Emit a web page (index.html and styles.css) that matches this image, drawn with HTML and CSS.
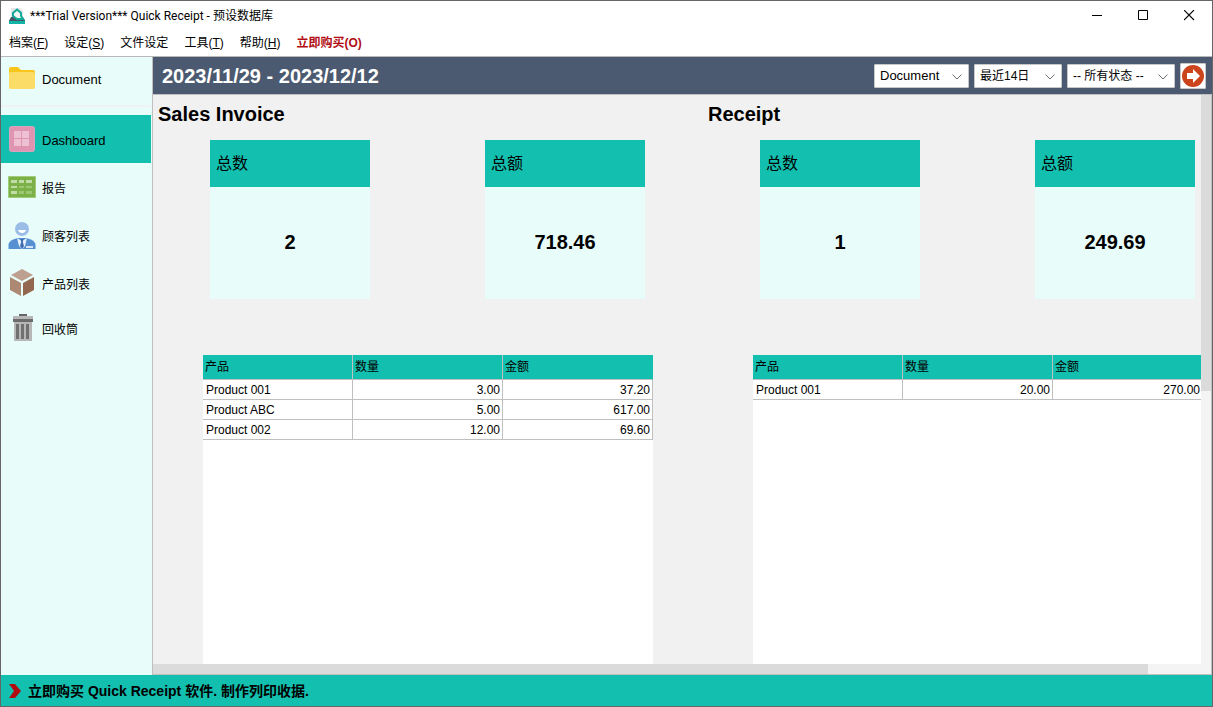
FILE: index.html
```
<!DOCTYPE html>
<html lang="zh-Hans">
<head>
<meta charset="utf-8">
<title>Quick Receipt</title>
<link rel="stylesheet" href="styles.css">
</head>
<body>
<div class="window">
  <header class="titlebar">
    <svg class="app-icon" width="16" height="16" viewBox="0 0 16 16"><path d="M2 0h9l3 3v8H2z" fill="#e4e6e8"/><path d="M0 12h16v4H0z" fill="#12b5a5"/><path d="M2 9h12l2 4H0z" fill="#475569"/><path d="M8 1.500L12 5v3l2 3H8L4 8V5z" fill="#f4f6f6" stroke="#12a999" stroke-width="2"/></svg>
    <h1 class="window-title">***Trial Version*** Quick Receipt - 预设数据库</h1>
    <div class="window-controls">
      <button class="window-button" aria-label="最小化"><svg width="11" height="11"><path d="M0 5.5h10" stroke="#000"/></svg></button>
      <button class="window-button" aria-label="最大化"><svg width="11" height="11"><path d="M.5 .5h9v9h-9z" fill="none" stroke="#000"/></svg></button>
      <button class="window-button" aria-label="关闭"><svg width="11" height="11"><path d="M0 0l10 10M10 0L0 10" stroke="#000" stroke-width="1.1"/></svg></button>
    </div>
  </header>
  <nav class="menubar">
    <button class="menu">档案(<u>F</u>)</button>
    <button class="menu">设定(<u>S</u>)</button>
    <button class="menu">文件设定</button>
    <button class="menu">工具(<u>T</u>)</button>
    <button class="menu">帮助(<u>H</u>)</button>
    <button class="menu menu-buy">立即购买(O)</button>
  </nav>
  <div class="workspace">
    <nav class="sidebar">
      <a class="side-link side-document" href="#document">
        <svg width="28" height="28" viewBox="0 0 28 28"><path d="M1 5a2 2 0 0 1 2-2h7l3 3h12a2 2 0 0 1 2 2v4H1z" fill="#f8c51b"/><rect x="1" y="8" width="26" height="17" rx="2" fill="#fbdc67"/></svg>
        <span class="side-label latin">Document</span></a>
      <a class="side-link active" href="#dashboard">
        <svg width="28" height="28" viewBox="0 0 28 28"><rect x="1.5" y="1.5" width="25" height="25" rx="2" fill="#df94b1" stroke="#d7a4bd"/><path d="M6 6h7v7H6zM14 6h7v7h-7zM6 14h7v7H6zM14 14h7v7h-7z" fill="#edc0d2"/></svg>
        <span class="side-label latin">Dashboard</span></a>
      <a class="side-link" href="#reports">
        <svg width="28" height="28" viewBox="0 0 28 28"><path d="M.5 3.5h27v21H.5z" fill="#7bb146" stroke="#a1ca7b"/><path d="M3 7h6v3H3zM11 7h5v3h-5zM18 7h6v3h-6zM3 13h6v2H3zM3 18h6v3H3z" fill="#c2dca8"/><path d="M11 13h5v2h-5zM18 13h6v2h-6zM11 18h5v3h-5zM18 18h6v3h-6z" fill="#9cc773"/></svg>
        <span class="side-label">报告</span></a>
      <a class="side-link" href="#customers">
        <svg width="28" height="28" viewBox="0 0 28 28"><circle cx="14" cy="8" r="7" fill="#9abde8"/><path d="M10 9h8q-1 3-4 3t-4-3z" fill="#fff"/><path d="M.5 28v-5q1-4 9-6h9q8 2 9 6v5z" fill="#5790d2"/><path d="M9 17l5 3 5-3-2 8-3 3-3-3z" fill="#e5f2fc"/><path d="M12.5 18h3l-.7 3 1.2 4-2 3-2-3 1.2-4z" fill="#416bae"/><path d="M18 25h7v2h-7z" fill="#d5e5f6"/></svg>
        <span class="side-label">顾客列表</span></a>
      <a class="side-link" href="#products">
        <svg width="28" height="28" viewBox="0 0 28 28"><path d="M14 0l11 6-11 6L3 6z" fill="#bda08f"/><path d="M2 8l11 6v13L2 21z" fill="#ad8872"/><path d="M26 8l-11 6v13l11-6z" fill="#946850"/></svg>
        <span class="side-label">产品列表</span></a>
      <a class="side-link side-trash" href="#trash">
        <svg width="28" height="28" viewBox="0 0 28 28"><path d="M11 0h8v3h-8z" fill="#666"/><path d="M5 2h20v3H5zM6 8h18v19H6z" fill="#b7b7b7"/><path d="M5 5h20v3H5z" fill="#6c6c6c"/><path d="M8 10h3v15H8zM13 10h3v15h-3zM18 10h3v15h-3z" fill="#707070"/></svg>
        <span class="side-label">回收筒</span></a>
    </nav>
    <main class="main">
      <div class="filterbar">
        <h2 class="period">2023/11/29 - 2023/12/12</h2>
        <form class="filters">
          <div class="picker picker-type"><select class="latin" aria-label="文件类型"><option>Document</option></select><svg width="10" height="6"><path d="M.5 .5L5 5 9.500 .5" /></svg></div>
          <div class="picker picker-range"><select aria-label="期间"><option>最近14日</option></select><svg width="10" height="6"><path d="M.5 .5L5 5 9.500 .5" /></svg></div>
          <div class="picker picker-status"><select aria-label="状态"><option>-- 所有状态 --</option></select><svg width="10" height="6"><path d="M.5 .5L5 5 9.500 .5" /></svg></div>
          <button class="go" type="button" aria-label="执行"><svg width="24" height="24" viewBox="0 0 24 24"><circle cx="12" cy="12" r="11" fill="#cb441b"/><path d="M6 9h6V5l7 7-7 7v-4H6z" fill="#fff"/></svg></button>
        </form>
      </div>
      <div class="scroller">
        <div class="board">
          <section class="group">
            <h3 class="group-title">Sales Invoice</h3>
            <div class="cards">
              <article class="card"><h4 class="card-title">总数</h4><p class="card-value">2</p></article>
              <article class="card"><h4 class="card-title">总额</h4><p class="card-value">718.46</p></article>
            </div>
            <div class="table-area">
              <table class="items">
                <thead><tr><th>产品</th><th>数量</th><th>金额</th></tr></thead>
                <tbody>
                  <tr><td>Product 001</td><td>3.00</td><td>37.20</td></tr>
                  <tr><td>Product ABC</td><td>5.00</td><td>617.00</td></tr>
                  <tr><td>Product 002</td><td>12.00</td><td>69.60</td></tr>
                </tbody>
              </table>
            </div>
          </section>
          <section class="group">
            <h3 class="group-title">Receipt</h3>
            <div class="cards">
              <article class="card"><h4 class="card-title">总数</h4><p class="card-value">1</p></article>
              <article class="card"><h4 class="card-title">总额</h4><p class="card-value">249.69</p></article>
            </div>
            <div class="table-area">
              <table class="items">
                <thead><tr><th>产品</th><th>数量</th><th>金额</th></tr></thead>
                <tbody>
                  <tr><td>Product 001</td><td>20.00</td><td>270.00</td></tr>
                </tbody>
              </table>
            </div>
          </section>
        </div>
        <div class="track track-vertical"><div class="thumb"></div></div>
        <div class="track track-horizontal"><div class="thumb"></div></div>
      </div>
    </main>
  </div>
  <footer class="promo">
    <svg width="12" height="14" viewBox="0 0 12 14"><path d="M0 0h6l6 7-6 7H0l5-7z" fill="#b00d12"/></svg>
    <a class="promo-link" href="#buy">立即购买 Quick Receipt 软件. 制作列印收据.</a>
  </footer>
</div>
</body>
</html>
```
FILE: styles.css
```
* { box-sizing: border-box; }
body {
  margin: 0;
  font-family: "Liberation Sans", "Noto Sans CJK SC", sans-serif;
  font-size: 12px;
  line-height: 16px;
  color: #000;
}
h1, h2, h3, h4, p { margin: 0; }
button, select { font: inherit; color: inherit; }
svg { display: block; flex: none; }
a { color: inherit; text-decoration: none; }

.window {
  display: flex;
  flex-direction: column;
  height: 100vh;
  border: 1px solid #666;
  background: #fff;
}
.titlebar { display: flex; align-items: center; height: 29px; padding-left: 8px; gap: 5px; }
.window-title { flex: 1; font: 12px/16px Roboto, "Noto Sans CJK SC", sans-serif; }
.window-controls { display: flex; }
.window-button {
  display: grid;
  place-items: center;
  width: 46px;
  height: 28px;
  padding: 0;
  border: 0;
  background: none;
}
.menubar { display: flex; align-items: center; gap: 16px; height: 27px; padding: 0 8px; border-bottom: 1px solid #b9b9b9; }
.menu { padding: 0; border: 0; background: none; white-space: nowrap; }
.menu-buy { color: #b00d12; font-weight: bold; }

.workspace { display: flex; flex: 1; min-height: 0; }
.sidebar { flex: none; width: 152px; padding-right: 1px; background: #e8fcfa; border-right: 1px solid #c0c0c0; }
.side-link { display: flex; align-items: center; gap: 6px; height: 48px; padding-left: 7px; }
.side-label { padding-top: 3px; }
.latin { font-size: 13px; }
.side-document { height: 50px; padding-bottom: 6px; margin-bottom: 8px; border-bottom: 2px solid #f1f1f1; }
.side-trash { height: 42px; }
.active { background: #13bfae; }

.main { display: flex; flex-direction: column; flex: 1; min-width: 0; background: #f1f1f1; }
.filterbar {
  display: flex;
  align-items: center;
  justify-content: space-between;
  height: 38px;
  padding: 0 6px 0 9px;
  background: #4b5a70;
  border-bottom: 1px solid #c0c0c0;
}
.period { font-size: 20px; line-height: 24px; color: #fff; }
.filters { display: flex; gap: 5px; }
.picker { position: relative; height: 24px; margin-top: 1px; }
.picker-type { width: 95px; }
.picker-range { width: 88px; }
.picker-status { width: 108px; }
.picker select {
  width: 100%;
  height: 24px;
  padding: 0 20px 0 5px;
  border: 1px solid #c8c8c8;
  border-radius: 1px;
  background: #fff;
  appearance: none;
}
.picker svg { position: absolute; right: 7px; top: 10px; fill: none; stroke: #707070; pointer-events: none; }
.go { width: 26px; height: 26px; padding: 0; border: 1px solid #c8c8c8; border-radius: 1px; background: #fff; }

.scroller {
  display: grid;
  grid-template: minmax(0, 1fr) 10px / minmax(0, 1fr) 10px;
  flex: 1;
  min-height: 0;
  border-right: 1px solid #c0c0c0;
  border-bottom: 1px solid #c0c0c0;
}
.board { display: flex; overflow: hidden; }
.group { display: flex; flex-direction: column; flex: none; width: 550px; padding-top: 7px; }
.group-title { padding-left: 5px; font-size: 20px; line-height: 24px; }
.cards { display: flex; gap: 115px; padding: 14px 0 56px 57px; }
.card { width: 160px; height: 159px; background: #e8fcfa; }
.card-title { padding: 12px 6px 11px; background: #13bfae; font-size: 16px; line-height: 24px; font-weight: normal; }
.card-value { padding-top: 43px; text-align: center; font-size: 20px; line-height: 24px; font-weight: bold; }
.table-area { flex: 1; width: 450px; margin-left: 50px; background: #fff; }
.items { width: 100%; table-layout: fixed; border-collapse: separate; border-spacing: 0; }
.items th, .items td { padding: 0 2px; border-right: 1px solid #c0c0c0; border-bottom: 1px solid #c0c0c0; }
.items th { height: 25px; background: #13bfae; font-weight: normal; text-align: left; }
.items th:last-child { border-right-color: #13bfae; }
.items td { height: 20px; text-align: right; }
.items td:first-child { padding-left: 3px; text-align: left; }
.track { background: #f4f4f4; }
.thumb { background: #dbdbdb; }
.track-vertical .thumb { height: 52%; }
.track-horizontal { grid-column: 1 / -1; }
.track-horizontal .thumb { width: 94%; height: 100%; }

.promo { display: flex; align-items: center; gap: 7px; height: 31px; padding-left: 8px; background: #13bfae; }
.promo-link { font-size: 14px; line-height: 20px; font-weight: bold; }
```
